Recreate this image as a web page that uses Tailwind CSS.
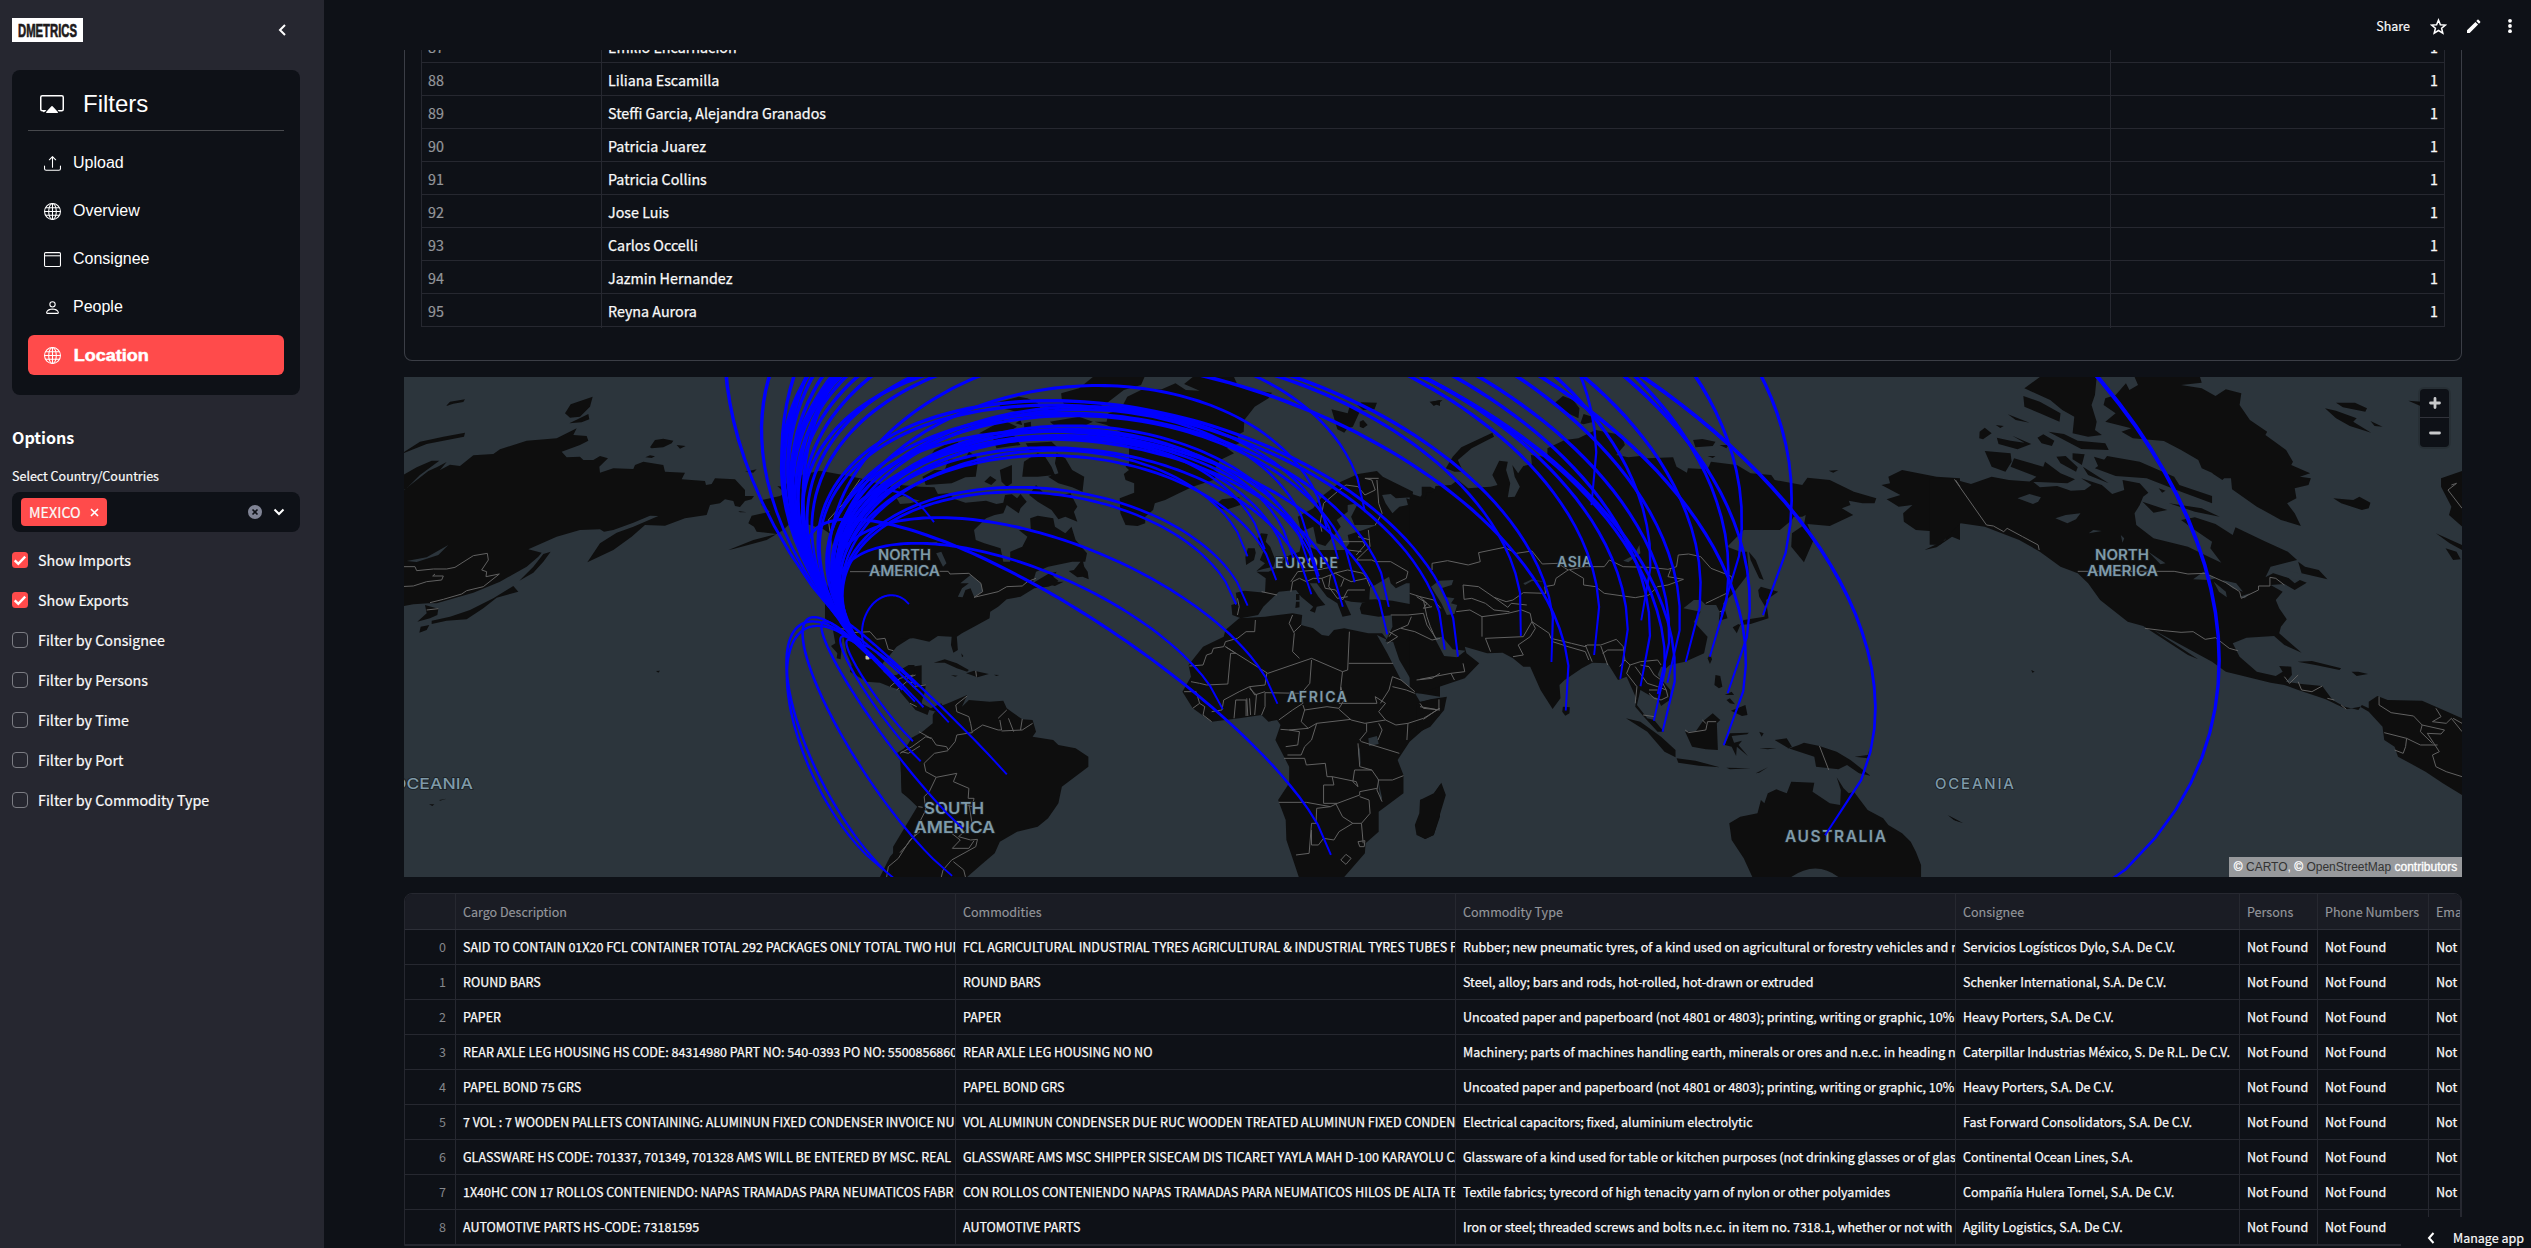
<!DOCTYPE html>
<html lang="en">
<head>
<meta charset="utf-8">
<title>DMetrics</title>
<script src="https://cdn.jsdelivr.net/npm/@tailwindcss/browser@4"></script>
</head>
<body class="flex h-[1248px] w-[2531px] overflow-hidden bg-[#0e1117] font-['Noto_Sans_CJK_SC',sans-serif] text-[14.3px] text-[#fafafa]">

<!-- Sidebar -->
<aside class="flex w-[324px] shrink-0 flex-col bg-[#262730] px-3">
  <div class="flex h-[60px] items-center justify-between pr-[24px]">
    <div class="flex h-6 w-[71px] items-center justify-center bg-white">
      <svg class="h-6 w-[71px]" viewBox="0 0 71 24"><text x="6" y="18.500" textLength="59" lengthAdjust="spacingAndGlyphs" font-family="Liberation Sans, sans-serif" font-weight="bold" font-size="19" fill="#1d1a1b" stroke="#1d1a1b" stroke-width="0.700">DMETRICS</text></svg>
    </div>
    <svg class="h-4 w-3 fill-none stroke-white stroke-2" viewBox="0 0 12 16"><path d="M9 3L4 8l5 5"/></svg>
  </div>

  <nav class="mt-[10px] flex h-[325px] w-72 flex-col rounded-lg bg-[#0e1117] px-4 font-['Liberation_Sans',sans-serif] text-base text-white">
    <div class="flex h-[61px] items-center gap-[19px] border-b border-[#47494d] pl-3 pt-[8px] text-2xl">
      <svg class="h-6 w-6 fill-white" viewBox="0 0 16 16"><path d="M2.500 13.500A.5.5 0 0 1 2 13h-.5A1.500 1.500 0 0 1 0 11.500v-8A1.500 1.500 0 0 1 1.500 2h13A1.500 1.500 0 0 1 16 3.500v8a1.500 1.500 0 0 1-1.500 1.500h-1.900l-.85-1h2.750a.5.5 0 0 0 .5-.5v-8a.5.5 0 0 0-.5-.5h-13a.5.5 0 0 0-.5.5v8a.5.5 0 0 0 .5.5h2.750l-.85 1z"/><path d="M7.620 9.500a.5.5 0 0 1 .76 0l3.550 3.900a.4.4 0 0 1-.3.600H4.400a.4.4 0 0 1-.3-.600z"/></svg>
      <span>Filters</span>
    </div>
    <div class="mt-[12px] flex h-10 items-center gap-3 pl-4">
      <svg class="h-[17px] w-[17px] fill-white" viewBox="0 0 16 16"><path d="M.5 9.900a.5.5 0 0 1 .5.5v2.500a1 1 0 0 0 1 1h12a1 1 0 0 0 1-1v-2.500a.5.5 0 0 1 1 0v2.500a2 2 0 0 1-2 2H2a2 2 0 0 1-2-2v-2.500a.5.5 0 0 1 .5-.5z"/><path d="M7.646 1.146a.5.5 0 0 1 .708 0l3 3a.5.5 0 0 1-.708.708L8.500 2.707V11.500a.5.5 0 0 1-1 0V2.707L5.354 4.854a.5.5 0 1 1-.708-.708l3-3z"/></svg>
      <span>Upload</span>
    </div>
    <div class="mt-2 flex h-10 items-center gap-3 pl-4">
      <svg class="h-[17px] w-[17px] fill-none stroke-white" viewBox="0 0 16 16"><circle cx="8" cy="8" r="7.500"/><ellipse cx="8" cy="8" rx="3.600" ry="7.500"/><path d="M8 .5v15M.5 8h15M1.600 4.500h12.800M1.600 11.500h12.800"/></svg>
      <span>Overview</span>
    </div>
    <div class="mt-2 flex h-10 items-center gap-3 pl-4">
      <svg class="h-[17px] w-[17px] fill-none stroke-white" viewBox="0 0 16 16"><rect x=".5" y="1.500" width="15" height="13" rx="1"/><path d="M.5 4.500h15"/></svg>
      <span>Consignee</span>
    </div>
    <div class="mt-2 flex h-10 items-center gap-3 pl-4">
      <svg class="h-[17px] w-[17px] fill-white" viewBox="0 0 16 16"><path d="M8 8a3 3 0 1 0 0-6 3 3 0 0 0 0 6zm2-3a2 2 0 1 1-4 0 2 2 0 0 1 4 0zm4 8c0 1-1 1-1 1H3s-1 0-1-1 1-4 6-4 6 3 6 4zm-1-.004c-.001-.246-.154-.986-.832-1.664C11.516 10.680 10.289 10 8 10c-2.290 0-3.516.680-4.168 1.332-.678.678-.830 1.418-.832 1.664h10z"/></svg>
      <span>People</span>
    </div>
    <div class="mt-[8px] flex h-10 items-center gap-3 rounded-md bg-[#ff4b4b] pl-4 font-bold">
      <svg class="h-[17px] w-[17px] fill-none stroke-white" viewBox="0 0 16 16"><circle cx="8" cy="8" r="7.500"/><ellipse cx="8" cy="8" rx="3.600" ry="7.500"/><path d="M8 .5v15M.5 8h15M1.600 4.500h12.800M1.600 11.500h12.800"/></svg>
      <svg class="h-5 w-[80px] fill-white" viewBox="0 0 80 20"><text x="0.800" y="15.800" textLength="75" lengthAdjust="spacingAndGlyphs" font-family="Liberation Sans, sans-serif" font-weight="bold" font-size="16" stroke="#fff" stroke-width=".5">Location</text></svg>
    </div>
  </nav>

  <h3 class="mt-[30px] h-6 text-[16.100px] leading-6 font-bold text-white">Options</h3>
  <label class="mt-[17px] block h-5 text-[12.500px] leading-5 [-webkit-text-stroke:0.200px_#fafafa]">Select Country/Countries</label>
  <div class="mt-[6px] flex h-10 w-72 items-center rounded-lg bg-[#0e1117] pr-[14px] pl-[9px]">
    <div class="flex h-7 w-[86px] items-center justify-between rounded bg-[#ff4b4b] pr-[8px] pl-2">
      <span class="leading-5 [-webkit-text-stroke:0.200px_#fafafa]">MEXICO</span>
      <svg class="h-[9px] w-[9px] fill-none stroke-white stroke-[1.600]" viewBox="0 0 9 9"><path d="M1 1l7 7M8 1L1 8"/></svg>
    </div>
    <svg class="ml-auto h-[14px] w-[14px]" viewBox="0 0 14 14"><circle cx="7" cy="7" r="7" fill="#808495"/><path d="M4.500 4.500l5 5M9.500 4.500l-5 5" stroke="#0e1117" stroke-width="1.700"/></svg>
    <svg class="ml-[10px] h-[14px] w-[14px] fill-none stroke-white stroke-2" viewBox="0 0 14 14"><path d="M2.500 4.500L7 9l4.500-4.500"/></svg>
  </div>
  <div id="checks" class="mt-[8px] flex flex-col [-webkit-text-stroke:0.200px_#fafafa]"></div>
</aside>

<main class="relative flex min-w-0 flex-1 flex-col">
  <header class="flex h-[50px] shrink-0 items-center justify-end pt-[2px] pr-[13px]">
    <span class="text-[12.500px] leading-5 [-webkit-text-stroke:0.200px_#fafafa]">Share</span>
    <svg class="ml-[20px] h-[17px] w-[17px] fill-none stroke-white stroke-[1.500]" viewBox="0 0 17 17"><path d="M8.500 2l1.900 4.700 5 .4-3.800 3.200 1.200 4.900-4.300-2.700-4.300 2.700 1.200-4.900L1.600 7.100l5-.4z"/></svg>
    <svg class="ml-[19px] h-[15px] w-[15px] fill-white" viewBox="0 0 15 15"><path d="M1 11.300L9.400 2.900l2.700 2.700L3.700 14H1zM10.300 2l1.200-1.200c.3-.3.700-.3 1 0l1.700 1.700c.3.300.3.700 0 1L13 4.700z"/></svg>
    <svg class="ml-[21px] h-4 w-4 fill-white" viewBox="0 0 16 16"><circle cx="8" cy="2.800" r="1.900"/><circle cx="8" cy="8" r="1.900"/><circle cx="8" cy="13.200" r="1.900"/></svg>
  </header>

  <section class="flex min-h-0 flex-1 flex-col overflow-hidden pr-[69px] pl-20">
    <div class="h-[311px] shrink-0 overflow-hidden rounded-b-lg border-x border-b border-[#41444c]/90 px-4">
      <div id="people" class="-mt-[20px] border-x border-[#262830]"></div>
    </div>

    <!-- Route map -->
    <div class="relative mt-4 h-[500px] shrink-0 overflow-hidden bg-[#2c353c]">
      <svg id="map" class="block h-[500px] w-[2058px]" viewBox="0 0 2058 500">
        <g id="land" fill="#0e0e0e">
          <path transform="translate(-4 -7) scale(.33333)" d="M0,320L50,292 95,272 118,272 60,315 20,355 0,365ZM0,370L35,342 85,303 110,292 140,276 120,300 150,284 180,288 220,256 280,252 300,238 380,212 470,205 530,175 520,195 560,198 565,212 540,225 485,245 500,262 540,260 550,270 580,270 600,258 624,265 598,290 600,308 640,295 700,297 705,285 730,275 790,285 795,305 855,308 845,328 915,333 918,345 935,342 945,325 1005,328 1035,360 1035,378 1062,378 1055,388 1035,393 1020,411 1005,408 1000,393 975,388 960,400 930,405 920,435 855,445 795,467 735,465 695,500 640,540 562,577 600,520 650,488 700,470 775,438 750,437 700,458 640,480 612,485 600,478 540,480 470,500 385,538 425,548 415,560 380,590 300,635 220,668 110,700 85,700 40,703 0,710ZM452,545L430,552 400,590 358,632 400,608 430,575ZM340,648L355,665 290,683 250,715 200,748 140,752 95,762 95,752 150,740 210,720 280,685ZM58,788L62,770 88,765 80,780ZM52,755L80,730 75,705 115,716 112,735 90,745ZM495,130L512,103 578,80 570,110 540,140 510,143ZM508,160L565,132 568,148 545,157ZM750,232L765,210 790,206 820,212 815,220 790,232 755,235ZM830,225L857,228 840,236ZM736,262L750,256 765,259 755,264ZM0,254L60,215 130,200 195,188 192,200 80,222ZM138,108L150,95 195,88 190,96 160,101ZM1035,305L1070,298 1060,308ZM1015,423L1040,427 1020,427ZM768,903L780,902 775,908ZM87,1303L103,1303 97,1308ZM118,1290L140,1286 120,1292Z
          M1132,348L1150,350 1180,320 1260,302 1330,315 1380,325 1450,345 1565,370V802L1530,805 1490,830 1470,855 1448,880 1450,905 1465,917 1490,915 1515,900 1535,890 1565,886V1010L1525,985 1500,960 1470,950 1440,938 1400,935 1350,905 1355,885 1340,850 1328,790 1322,868 1310,865 1312,850 1293,828 1306,820 1298,775 1275,745V680L1290,620 1300,530 1288,490 1270,478 1220,462 1165,465 1150,480 1100,510 1000,537 985,540 1060,510 1130,492 1070,485 1062,470 1045,460 1055,437 1110,425 1085,405V390L1140,378 1155,370Z
          M1568,1085L1535,1103 1520,1130 1490,1150 1502,1175 1505,1268 1556,1307 1540,1350 1505,1420 1470,1460 1440,1521H1568Z"/>
          <path transform="translate(496 -7) scale(.34437 .33333)" d="M0,345L60,350 100,352 110,372 140,370 160,388 190,398 250,392 280,402 300,398 305,375 325,373 340,385 350,372 368,395 350,415 345,430 310,405 300,430 275,435 250,445 215,480 220,510 245,520 292,535 300,575 320,575 320,545 355,530 370,500 345,480 380,480 378,445 400,437 445,445 450,470 480,490 498,470 510,510 543,550 538,575 500,575 430,590 395,605 385,640 430,612 455,605 445,620 460,632 445,645 430,650 390,655 350,680 310,688 285,710 262,725 260,745 215,770 180,790 165,800 168,840 155,848 148,825 150,800 110,798 85,815 40,805 0,805ZM490,603L505,600 530,568 535,590 545,605 548,628 530,620 515,622ZM425,642L440,635 475,635 450,648Z
          M75,345L65,320 100,300 130,300 140,270 190,265 200,245 222,260 225,285 220,320 190,322 150,340ZM360,275L375,265 400,250 420,258 440,290 450,315 400,320 355,320ZM455,250L480,265 500,300 535,320 530,365 500,352 460,340 430,320 460,310 450,280ZM375,375L395,345 420,372 470,375 495,370 515,410 505,425 515,455 480,440 460,448 440,420 400,395ZM468,70L520,55 560,21H710L700,45 650,60 600,100 560,118 540,110 480,110 470,90ZM290,95L345,80 370,85 400,100 410,120 350,130 320,120 290,115ZM435,155L520,140 560,155 530,170 450,168ZM100,240L130,225 170,215 160,240 110,262 80,270ZM230,190L300,150 340,170 290,200ZM245,335L262,318 280,330 265,345ZM290,300L325,285 325,340 310,350 295,335ZM335,160L350,150 355,165ZM360,160L380,155 382,190 362,192ZM365,220L440,215 460,235 380,245ZM270,205L330,195 350,225 280,235ZM425,112L450,105 470,118 440,130Z
          M565,155L600,155 605,130 640,120 660,80 700,60 760,58 800,40 830,60 870,62 825,42 850,21H970L980,45 1020,60 1080,68 1070,85 1030,110 1000,150 998,185 980,195 985,220 950,235 970,250 930,270 912,300 925,310 910,330 850,350 810,370 770,390 740,400 735,420 712,440 712,460 690,468 655,465 640,430 638,385 680,368 680,340 655,330 650,312 665,300 655,290 665,280 665,230 640,215 640,185 600,165ZM903,392L920,400 935,388 985,382 988,405 945,420 925,412 908,400Z
          M1253,118L1300,130 1305,112 1335,125 1315,170 1300,175 1290,188 1270,178ZM1328,105L1340,97 1385,98 1378,118 1345,120ZM1335,155L1345,150 1358,165 1345,175 1335,170ZM1540,97L1568,90V108Z
          M1040,505L1048,490 1068,492 1062,515 1075,530 1090,570 1085,590 1055,597 1035,603 1060,580 1045,570 1055,545 1042,525ZM1003,562L1010,535 1030,535 1033,548 1028,570 1005,585Z
          M1155,440L1200,415 1230,375 1280,335 1330,312 1385,303 1402,320 1440,340 1490,365 1487,382 1440,385 1425,372 1400,375 1410,400 1430,430 1450,410 1475,405 1470,385 1500,395 1515,375 1515,350 1540,350 1568,365V675L1530,672 1500,640 1470,640 1440,655 1425,640 1420,620 1380,645 1365,652 1362,700 1310,695 1290,690 1310,735 1285,740 1270,700 1240,680 1210,640 1190,640 1215,680 1235,705 1210,710 1205,728 1190,722 1200,710 1165,680 1150,660 1100,665 1055,710 1040,735 990,745 965,735 962,705 980,700 975,668 1000,662 1060,668 1062,625 1035,605 1070,605 1100,590 1120,560 1160,545 1165,520 1175,495 1190,530 1210,540 1290,540 1305,520 1300,495 1345,480 1385,465 1320,465 1310,440 1330,400 1300,405 1300,425 1268,450 1280,470 1265,490 1235,528 1210,520 1200,470 1165,485ZM1335,715L1345,690 1380,688 1430,692 1480,702 1568,690V740H1520L1430,735 1390,740 1340,732ZM1428,735L1568,700V980L1505,970 1490,940 1450,870 1432,815 1410,815 1430,770Z
          M1415,810L1385,795 1415,850 1435,890 1455,930 1490,960 1510,995 1568,985V1035L1480,1115 1445,1170 1462,1215V1270L1390,1325V1385L1352,1420 1350,1450 1290,1521H1158L1135,1450 1122,1410 1120,1350 1098,1290 1130,1240V1190L1090,1110 1105,1065 1095,1050 1070,1055 1050,1035 985,1045 905,1055 850,1015 820,965 845,920 838,885 880,830 940,800 945,780 985,745 1060,740 1140,730 1168,735 1165,765 1200,775 1225,795 1245,798 1260,780 1290,775 1360,790 1400,790ZM1568,1245L1545,1280 1510,1290 1508,1330 1495,1365 1500,1395 1525,1407 1550,1395 1568,1340ZM1150,672L1160,672 1160,690 1150,690ZM1150,695L1160,695 1160,712 1148,714Z
          M0,900L25,885 42,885 42,920 25,940 75,945 72,965 62,1000 90,1015 120,1000 125,1012 105,1025 85,1020 80,1035 45,1020 0,965ZM98,878L130,868 165,880 200,900 195,905 165,895 130,878ZM192,910L215,902 258,912 225,922ZM148,915L168,917 160,920ZM273,914L288,915 280,918ZM178,850L184,858 180,862Z
          M110,1012L150,995 195,975 180,1010 200,990 260,995 300,992 310,1015 330,1030 355,1048 385,1050 395,1085 385,1100 445,1110 460,1125 510,1135 547,1160V1190L470,1250 460,1300 430,1345 400,1370 340,1385 290,1415 275,1450 235,1485 195,1521H-20L-20,1430 50,1310 5,1265 0,1150 35,1110 65,1085 95,1060 95,1035Z"/>
          <path transform="translate(1016 -7) scale(.34437 .33333)" d="M-30,370L15,385 20,368 40,365 45,348 90,345 110,330 140,355 205,350 225,345 210,315 230,272 255,275 250,300 262,340 255,382 275,380 290,350 275,320 268,285 285,310 300,288 325,283 322,255 370,262 370,235 420,210 460,205 510,180 585,195 595,225 570,255 605,262 640,258 660,265 735,262 745,290 775,308 778,295 835,298 845,275 920,285 960,310 1020,315 1030,330 1110,345 1125,323 1190,330 1260,365 1325,385 1320,400 1285,400 1245,392 1250,405 1225,415 1258,435 1190,468 1125,462 1143,510 1115,577 1078,530 1080,490 1115,465 1120,435 1110,440 1085,440 1080,450 1045,480 940,480 892,530 930,545 950,545 955,610 910,670 880,700 893,745 868,752 870,725 860,705 830,705 815,690 795,690 765,715 815,725 795,755 835,800 825,850 770,875 725,885 715,895 700,890 690,915 727,960 725,990 700,1008 690,985 665,975 640,960 630,1005 660,1045 680,1050 708,1085 690,1085 650,1040 625,1010 628,985 600,920 575,930 545,880 500,878 470,895 420,930 405,945 408,985 385,1017 350,960 320,890 300,890 270,865 240,848 195,850 130,830 135,850 172,880 130,925 0,970H-30ZM-10,1000L30,988 78,980 70,1020 30,1070 -10,1090ZM75,295L95,260 120,232 210,188 215,200 150,235 110,270 125,305 100,305ZM390,100L415,78 445,90 463,115 460,145 430,130ZM466,160L475,132 500,140 505,155 475,163ZM793,210L820,207 858,215 850,228 800,232ZM870,225L895,225 890,235ZM835,258L858,258 850,264ZM1187,302L1215,300 1200,308ZM28,95L65,90 55,100 40,108ZM0,1290L40,1270 62,1238 75,1275 40,1395 15,1407 0,1398Z
          M415,1010L435,1012 434,1030 422,1037 413,1025ZM598,1045L640,1055 700,1100 742,1140 742,1162 710,1145 660,1085ZM745,1165L800,1172 870,1192 810,1187 750,1178ZM770,1085L800,1085 820,1055 850,1030 872,1050 862,1060 865,1140 830,1138 790,1130ZM885,1125L900,1090 955,1088 950,1093 905,1098 912,1118 935,1112 925,1125 952,1158 920,1130 918,1158 905,1130ZM855,945L858,915 872,918 878,950 868,955ZM903,1022L945,1005 951,1035 935,1038ZM885,975L905,965 912,975ZM890,990L900,985 915,1003 900,1000ZM848,1005L862,990ZM835,865L843,853 848,868 842,882ZM985,1085L998,1090 992,1100ZM985,1135L1035,1134 1010,1138ZM890,1193L960,1195 900,1198ZM975,1210L1010,1192 985,1208ZM1030,1110L1065,1105 1080,1130 1065,1138 1100,1125 1115,1118 1160,1128 1210,1145 1250,1170 1308,1217 1275,1210 1240,1185 1215,1198 1150,1190 1145,1160 1070,1135ZM1262,1160L1300,1155 1305,1140 1300,1165ZM1335,1160L1356,1172ZM930,765L940,750 1000,740 1005,715 985,680 982,660 990,650 1040,665 1005,690 1012,745 960,762ZM908,772L925,762 930,765 920,790ZM955,545L975,570 998,630 985,625 960,570Z
          M965,1521L940,1465 905,1410 898,1360 930,1340 980,1330 990,1290 1000,1300 1010,1270 1035,1258 1065,1270 1078,1235 1145,1238 1140,1265 1190,1300 1220,1305 1222,1260 1210,1222 1230,1255 1245,1270 1260,1265 1300,1320 1345,1345 1360,1365 1400,1390 1425,1415 1440,1445 1455,1485V1521H1215Q1150,1470 1078,1521Z
          M1568,325L1500,320 1400,300 1360,320 1365,340 1340,345 1395,375 1355,388 1390,410 1430,405 1403,430 1405,455 1440,480 1530,487 1525,510 1465,540 1500,532 1545,500 1568,510ZM1535,1337L1568,1355 1550,1350ZM1340,423L1362,428Z"/>
          <path transform="translate(1536 -7) scale(.34437 .33333)" d="M-30,325L30,325 90,342 150,320 200,330 270,335 290,352 340,348 380,362 420,360 440,345 410,325 470,345 500,372 535,360 530,330 580,340 605,368 590,380 580,405 565,430 570,465 620,505 720,530 780,560 817,578 785,535 790,515 740,480 700,450 740,442 800,462 850,495 858,472 940,512 1010,545 1037,570 960,590 945,622 985,600 1030,640 1045,630 1065,638 1030,660 1000,642 960,645 995,665 975,690 985,715 1007,748 990,770 985,790 1050,848 1000,825 970,798 890,803 850,820 870,860 920,905 975,918 995,905 985,888 1020,890 1022,915 1005,935 1050,942 1110,948 1140,990 1175,1010 1215,1020 1225,1005 1245,1015 1245,995 1270,978 1300,990 1400,992 1450,1015 1516,1045V1275L1460,1240 1410,1205 1330,1160 1320,1130 1290,1110 1285,1070 1245,1025 1220,1010 1180,1018 1120,988 1040,960 1000,945 960,938 830,905 790,875 620,780 750,868 720,855 590,768 545,755 465,690 430,640 400,610 350,590 290,545 230,510 130,470 60,460 40,480 0,524H-30ZM1040,575L1060,590 1100,600 1125,628 1050,610Z
          M540,40L550,60 575,45 565,21H755L760,38 700,45 760,55 800,78 830,58 875,70 870,105 900,150 950,185 945,195 1005,240 1025,275 1020,285 1075,310 1045,320 1077,325 1070,345 1030,355 1035,385 1008,400 1030,430 1048,468 990,450 920,410 848,358 845,325 825,325 760,295 750,270 700,240 650,213 560,205 527,185 555,175 480,155 510,130 475,105 480,85 510,75ZM790,310L835,315 820,330Z
          M245,55L290,21H455L450,75 440,105 455,155 450,180 470,195 430,200 385,190 390,140 355,120 320,90ZM242,78L290,95 350,130 347,155 290,130 245,110ZM315,185L360,192 400,212 480,220 490,240 410,237 370,215ZM165,203L205,212 245,218 210,197 265,222 225,238 170,222ZM283,203L300,193 332,212 325,228 295,220ZM130,243L205,250 208,275 190,305 150,290ZM115,185L130,173 150,190 125,208 114,205ZM205,290L215,265 250,275 300,290 305,275 350,310 392,328 370,340 260,335 280,320ZM197,133L260,158 220,150ZM265,145L295,163ZM155,145L170,150ZM162,165L185,168 175,174ZM338,260L365,258 400,292 395,305 350,280ZM385,250L420,253 412,285 385,268ZM447,260L480,270 460,290ZM485,258L580,275 680,320 695,345 790,378 790,400 700,365 600,325 510,318 450,295 470,280ZM415,290L490,340 430,315ZM665,400L760,415 812,440 740,425ZM588,395L660,420 620,428ZM635,355L655,362 645,368Z
          M1142,385L1200,390 1218,380 1250,398 1245,415 1225,420 1165,400ZM1150,98L1205,98 1240,115 1235,125 1170,112ZM1118,115L1150,122 1210,145 1200,155 1252,188 1190,168 1150,145ZM1250,153L1285,170 1262,168ZM1360,92L1400,95V110ZM1455,325L1516,303V470L1478,435 1485,410 1455,350ZM1440,490L1516,525V540L1480,520ZM1468,535L1500,545 1512,568 1490,570ZM1038,875L1080,873 1165,895 1160,900 1090,885ZM1195,905L1215,905 1243,912 1210,918ZM1262,915L1278,917ZM1140,917L1160,918ZM1080,852L1095,860ZM265,900L275,905 268,908ZM173,1303L192,1305ZM187,1290L200,1286ZM22,1335L68,1360 45,1352Z"/>
        </g>
        <!-- inland water -->
        <g fill="#2c353c">
          <path transform="translate(-4 -7) scale(.33333)" d="M20,573L80,562 145,525 115,555 50,576ZM1490,385L1510,378 1560,392 1530,400 1500,402Z"/>
          <path transform="translate(496 -7) scale(.34437 .33333)" d="M168,680L180,655 200,640 175,640 205,615 235,640 240,665 215,680 205,655 190,660 182,682ZM105,550L120,545 135,580 125,590ZM1360,1105L1385,1098 1390,1122 1362,1128ZM60,520L110,515 130,500 105,520ZM1335,1130L1338,1190 1330,1150ZM1385,1215L1400,1285 1395,1290 1390,1250Z"/>
          <path transform="translate(1016 -7) scale(.34437 .33333)" d="M42,803L70,858 108,862 132,842 95,838 65,800ZM32,650L55,632 97,630 92,645 62,655 70,680 100,685 90,700 108,705 100,732 78,735 62,700ZM300,640L325,628 362,635 325,633 305,645ZM637,525L640,550 605,577 590,572 622,555Z"/>
          <path transform="translate(1536 -7) scale(.34437 .33333)" d="M225,385L260,372 293,382 285,395 270,402ZM335,445L365,435 408,430 395,448 370,460ZM432,490L445,480 470,483 440,488ZM525,495L535,505 530,518ZM605,545L655,580 640,583ZM735,628L765,605 800,625 780,630ZM795,635L830,665 833,682 810,665ZM820,630L860,640 880,665 850,655ZM870,680L900,670 885,685ZM955,605L985,592 1010,602 1050,612 1040,632 1000,620Z"/>
        </g>
        <!-- borders -->
        <g fill="none" stroke="#616161" stroke-width="1">
          <path vector-effect="non-scaling-stroke" transform="translate(-4 -7) scale(.33333)" d="M0,590L45,590 50,602 100,597 140,597 165,592 220,557 262,550 265,570 245,600 260,605 258,620 298,612 250,650 200,662 185,672 130,688 90,698M105,612L98,618 130,618 125,630 80,635 40,648 0,650M80,720L115,716M1380,328L1330,400 1285,450 1290,485M1350,605H1560M1305,775L1345,778 1355,788 1410,785 1430,808 1455,805 1465,838 1480,842M1505,1145L1525,1150 1560,1128M1555,1310L1568,1312M1460,1521L1465,1490 1495,1465 1530,1410 1560,1385M1470,950L1500,925 1540,915M1490,960L1520,935 1550,940M1530,1000L1550,1010"/>
          <path vector-effect="non-scaling-stroke" transform="translate(496 -7) scale(.34437 .33333)" d="M115,604H140L145,612 200,610 235,640 240,665 215,682 285,665 310,650 355,648 370,635 395,625M0,1150L35,1130 75,1100 90,1105 55,1085M90,1102L105,1125 135,1130 140,1140 160,1115 165,1095 195,1090 210,1088 205,1060 200,1040 165,1025 162,1005 195,978M140,1142L100,1150 70,1180 75,1205 105,1222 165,1210 155,1235 200,1255 198,1285 215,1285 210,1310 170,1300M105,1222L85,1265 70,1280 75,1320 60,1350 50,1385 20,1425 0,1448M200,1300L210,1365 170,1400 205,1410 225,1408 220,1430 150,1470 125,1500 120,1521M150,1390L175,1410 152,1435 200,1435 215,1412M155,1475L185,1500 190,1521M285,1045L310,1020M210,1085L240,1065 285,1080 295,1080 290,1050M295,1083L355,1080 385,1060M315,1045L330,1085M355,1047L350,1080M20,925L45,915M35,950L75,945M220,903L222,920
          M980,685L985,710 980,735M1050,665L1095,675M1135,665L1140,635 1160,625 1180,635 1200,625 1225,625 1250,615 1265,610 1290,625M1135,635L1155,605 1210,600 1260,590M1225,625L1235,655 1265,660 1285,690M1250,615L1245,650 1270,685 1300,680M1290,625L1310,635 1355,625 1365,650M1285,690L1300,660 1350,660M1290,625L1280,650M1260,610L1300,600 1345,610 1355,625M1225,485L1220,460 1230,400 1270,365 1295,345 1330,350 1350,375 1380,360 1370,330 1350,325 1390,325M1385,330L1390,400 1400,430 1380,465M1360,480L1365,530 1325,570 1370,570 1380,575 1425,575 1475,605 1470,625 1440,640M1285,515H1345L1350,525 1325,555M1300,540L1340,545M1330,500L1365,510M1480,670L1510,680 1540,710M1500,680L1530,700 1520,715 1545,710M1425,735L1475,735 1520,730 1530,765 1560,810M1485,740L1475,765 1430,785 1420,800M1455,775L1495,785 1545,810 1568,805M1420,785L1445,800 1415,820M1500,930L1545,925 1568,910
          M1032,750L1030,785 1005,785 980,805 945,815 940,830 910,835 905,850 890,855 880,885 840,888M945,830L1060,905 1068,910 1195,865 1285,905 1300,900 1305,785M1303,880H1432M945,830L975,850 960,850 952,942 890,945 870,940 845,935M1140,735L1130,760 1145,790 1140,845 1160,865M1165,765L1145,785M1195,870L1190,940 1165,970 1060,968 1060,1010 1050,1035M1065,910L1060,945 1015,950 985,965 940,990 935,1020 905,1025M1015,950L1030,975 1060,965M1015,955L1035,975 1030,1035M1015,985L1018,1035M1007,985L1010,1038M975,990H1005L1005,1038M975,990L970,1045M850,1015L870,1000 885,1010 880,1035 905,1055M825,965H860L870,1000M1165,970L1170,1000 1140,1020 1100,1050M1170,1005L1175,1020 1165,1055 1185,1075 1130,1080 1105,1078M1285,905L1280,950 1290,990 1275,1015 1240,1010 1175,1020M1280,950L1275,1000 1385,1000 1380,980 1410,1000 1390,1025 1410,1050 1350,1060 1310,1050 1275,1018M1430,920L1420,960 1395,1000M1430,920L1455,930 1495,965M1510,1000L1520,1015 1568,1020M1430,950L1470,960 1495,970M1410,1050L1440,1065 1475,1060 1520,1045 1568,1015M1475,1060L1472,1110M1355,1060L1355,1085 1335,1110 1340,1115 1450,1150M1390,1060L1400,1080 1388,1110M1185,1075L1210,1060 1310,1048M1210,1060L1195,1110 1175,1130 1165,1155 1125,1155M1130,1080L1160,1085 1155,1125 1120,1130M1115,1165H1175L1180,1185 1235,1180 1240,1220 1255,1220 1260,1245 1230,1245V1300L1270,1300M1330,1120L1335,1190 1370,1200 1320,1200 1315,1235 1330,1250 1325,1235 1255,1220M1370,1200L1390,1230 1385,1260 1400,1295M1390,1230H1430L1462,1217M1100,1297H1180L1250,1310 1270,1300 1335,1275 1335,1265 1385,1255M1250,1310L1210,1315 1208,1360H1195L1188,1450 1150,1455M1265,1300L1285,1340 1315,1360 1340,1360 1365,1330 1362,1290 1335,1280M1315,1360L1275,1385 1260,1410 1230,1405 1215,1425 1195,1425 1195,1380M1340,1360L1345,1420M1330,1415L1350,1412 1348,1430 1335,1430ZM1280,1470L1295,1453 1310,1465 1295,1483Z"/>
          <path vector-effect="non-scaling-stroke" transform="translate(1016 -7) scale(.34437 .33333)" d="M35,600L35,580 80,572 140,585 175,575 170,548 245,532 280,550 325,543 355,582 400,580 430,600 480,590 535,590 550,570 590,590 665,592 720,598 745,590 750,555 780,552 815,560 845,595 895,615 905,620 905,645 890,665M430,600L395,625 390,645 362,650 365,670 300,668 270,690 250,695 215,682 170,650 125,645 128,688M435,600L475,625 475,645 510,650 535,670 625,683 665,675 690,650 720,645 765,628 720,620 728,598M128,688L150,685 190,700 215,720 260,725M215,682L255,712 265,700 310,705M0,680L40,690 60,715M10,690L20,740 30,770 45,805M105,725L145,720 180,740 255,730 295,720 320,730 325,755 300,800 190,805 205,845M180,740V800M325,755L375,790 380,805 440,820 480,830 485,825 525,825 570,808 590,830 595,870 580,890M325,755L335,775 320,800 285,825 300,855 270,860M385,815L430,830 480,845 490,870M480,825L500,875M525,828L545,885M530,850L545,840 590,840M595,870L610,885 640,875 690,870 700,885M610,885L600,910 630,950 625,1000M625,890L660,940 690,950 715,960 720,980 700,990M640,885L665,890 680,915 700,930 715,960M665,960H690M665,970L680,985 700,990M648,1035L680,1040M830,700L870,680 890,670M870,725L885,722M770,1080L780,1088 830,1080 835,1055 860,1055M820,1050L830,1060M1160,1128L1187,1200M125,880L130,905 90,910 100,930M90,910L40,920 0,928M55,988V1015L10,1048M0,1010L45,1018M1555,330L1568,350"/>
          <path vector-effect="non-scaling-stroke" transform="translate(1536 -7) scale(.34437 .33333)" d="M42,328L135,465 155,468 185,485 195,475 240,500 285,525 288,540M400,604H680L720,612 770,610 830,638 870,665 875,685 925,660 925,648 958,648 958,622 975,625 1000,645M595,775L650,782 700,787 735,785 770,808 800,803 840,835 865,842M1000,920L1015,940 1040,915M1040,935L1050,960 1080,965 1110,948M1125,985L1145,990M1165,1005L1180,1018M1275,980L1275,1005 1310,1028 1375,1038 1400,1065 1465,1080 1455,1092 1415,1090 1450,1145 1430,1155 1440,1190 1470,1205 1516,1220M1290,1088L1355,1105 1395,1125 1445,1125M1355,1105L1352,1130 1345,1150 1320,1140M1400,1065L1395,1085 1430,1120M1440,1015L1455,1040 1430,1055 1470,1060 1485,1045 1516,1085M1490,1045L1516,1060M1516,415L1475,360 1500,340 1485,345"/>
        </g>
        <g id="labels" fill="#7f9aa9" font-family="Inter, sans-serif" font-weight="600" stroke="#1a2024" stroke-width="1.500" paint-order="stroke">
          <text x="474" y="183" font-size="14" textLength="53" lengthAdjust="spacingAndGlyphs">NORTH</text>
          <text x="465" y="199" font-size="14" textLength="71" lengthAdjust="spacingAndGlyphs">AMERICA</text>
          <text x="520" y="437" font-size="15.500" textLength="60" lengthAdjust="spacingAndGlyphs">SOUTH</text>
          <text x="510" y="455.500" font-size="15.500" textLength="81" lengthAdjust="spacingAndGlyphs">AMERICA</text>
          <text x="871" y="191" font-size="14" textLength="63">EUROPE</text>
          <text x="883" y="325" font-size="14" textLength="60">AFRICA</text>
          <text x="1153" y="190" font-size="14" textLength="35">ASIA</text>
          <text x="1381" y="465" font-size="15.500" textLength="101">AUSTRALIA</text>
          <text x="1531" y="412" font-size="15" font-weight="500" textLength="79">OCEANIA</text>
          <text x="-11" y="412" font-size="15" font-weight="500" textLength="80" lengthAdjust="spacingAndGlyphs">OCEANIA</text>
          <text x="1691" y="183" font-size="14" textLength="54" lengthAdjust="spacingAndGlyphs">NORTH</text>
          <text x="1683" y="199" font-size="14" textLength="71" lengthAdjust="spacingAndGlyphs">AMERICA</text>
        </g>
        <rect x="461.500" y="278.500" width="4" height="4" rx="1" fill="#c9c6a3"/>
        <g id="arcs" fill="#0000ff"></g>
      </svg>
      <div class="absolute top-3 right-[13px] flex w-[29px] flex-col divide-y divide-[#31333b] rounded bg-[#0e1117] shadow-[0_0_0_2px_rgba(0,0,0,0.1)]">
        <button class="flex h-[29px] items-center justify-center"><svg class="h-3 w-3 stroke-[#c8c9cb] stroke-[2.800]" viewBox="0 0 12 12"><path d="M1.500 6h9M6 1.500v9" stroke-linecap="round"/></svg></button>
        <button class="flex h-[29px] items-center justify-center"><svg class="h-3 w-3 stroke-[#c8c9cb] stroke-[2.800]" viewBox="0 0 12 12"><path d="M1.500 6h9" stroke-linecap="round"/></svg></button>
      </div>
      <div class="absolute right-0 bottom-0 flex h-5 w-[233px] items-center justify-center bg-[#97999c] font-['Liberation_Sans',sans-serif] text-xs whitespace-pre text-white"><span class="[-webkit-text-stroke:0.300px_white]">© </span><span class="text-[#333]">CARTO</span>, <span class="[-webkit-text-stroke:0.300px_white]">© </span><span class="text-[#333]">OpenStreetMap</span><span class="[-webkit-text-stroke:0.300px_white]"> contributors</span></div>
    </div>

    <!-- Shipments -->
    <div id="grid" class="mt-4 w-[2058px] shrink-0 overflow-hidden rounded-t-lg border border-[#262830] text-[12.530px]"></div>
  </section>

  <div class="absolute right-0 bottom-0 flex h-[31px] w-[130px] items-center bg-[#0e1117] pt-[11px] pl-[25px]">
    <svg class="h-[14px] w-[10px] fill-none stroke-white stroke-2" viewBox="0 0 10 14"><path d="M7.500 2L3 7l4.500 5"/></svg>
    <span class="ml-[17px] text-[12.500px] leading-5 whitespace-nowrap [-webkit-text-stroke:0.200px_#fafafa]">Manage app</span>
  </div>
</main>

<script>
// sidebar options
document.getElementById('checks').innerHTML = [
  ['Show Imports', 1], ['Show Exports', 1], ['Filter by Consignee'], ['Filter by Persons'],
  ['Filter by Time'], ['Filter by Port'], ['Filter by Commodity Type']
].map(([t, on]) => `<div class="flex h-10 items-center gap-[10px]">${on
  ? '<svg class="h-4 w-4" viewBox="0 0 16 16"><rect width="16" height="16" rx="3.500" fill="#ff4b4b"/><path d="M2.700 8.300l3.600 3.500 6.900-7.200" fill="none" stroke="#fff" stroke-width="2.400"/></svg>'
  : '<span class="h-4 w-4 rounded border border-[#7b7c83]"></span>'}<span class="leading-5">${t}</span></div>`).join('');

// people table
document.getElementById('people').innerHTML = ['Emilio Encarnacion', 'Liliana Escamilla', 'Steffi Garcia, Alejandra Granados',
  'Patricia Juarez', 'Patricia Collins', 'Jose Luis', 'Carlos Occelli', 'Jazmin Hernandez', 'Reyna Aurora']
  .map((n, i) => `<div class="grid h-[33px] grid-cols-[180px_1509px_1fr] border-b border-[#262830] leading-[34px]"><div class="border-r border-[#262830] pl-[6px] text-[#94969b] [-webkit-text-stroke:0.200px_#94969b]">${87 + i}</div><div class="border-r border-[#262830] pl-[6px] [-webkit-text-stroke:0.250px_#fafafa]">${n}</div><div class="pr-[6px] text-right [-webkit-text-stroke:0.250px_#fafafa]">1</div></div>`).join('');

// shipments table
const nf = 'Not Found';
const rows = [
  ['SAID TO CONTAIN 01X20 FCL CONTAINER TOTAL 292 PACKAGES ONLY TOTAL TWO HUNDRED', 'FCL AGRICULTURAL INDUSTRIAL TYRES AGRICULTURAL & INDUSTRIAL TYRES TUBES FLAPS', 'Rubber; new pneumatic tyres, of a kind used on agricultural or forestry vehicles and machines', 'Servicios Logísticos Dylo, S.A. De C.V.'],
  ['ROUND BARS', 'ROUND BARS', 'Steel, alloy; bars and rods, hot-rolled, hot-drawn or extruded', 'Schenker International, S.A. De C.V.'],
  ['PAPER', 'PAPER', 'Uncoated paper and paperboard (not 4801 or 4803); printing, writing or graphic, 10%', 'Heavy Porters, S.A. De C.V.'],
  ['REAR AXLE LEG HOUSING HS CODE: 84314980 PART NO: 540-0393 PO NO: 5500856860', 'REAR AXLE LEG HOUSING NO NO', 'Machinery; parts of machines handling earth, minerals or ores and n.e.c. in heading no', 'Caterpillar Industrias México, S. De R.L. De C.V.'],
  ['PAPEL BOND 75 GRS', 'PAPEL BOND GRS', 'Uncoated paper and paperboard (not 4801 or 4803); printing, writing or graphic, 10%', 'Heavy Porters, S.A. De C.V.'],
  ['7 VOL : 7 WOODEN PALLETS CONTAINING: ALUMINUN FIXED CONDENSER INVOICE NU', 'VOL ALUMINUN CONDENSER DUE RUC WOODEN TREATED ALUMINUN FIXED CONDEN', 'Electrical capacitors; fixed, aluminium electrolytic', 'Fast Forward Consolidators, S.A. De C.V.'],
  ['GLASSWARE HS CODE: 701337, 701349, 701328 AMS WILL BE ENTERED BY MSC. REAL', 'GLASSWARE AMS MSC SHIPPER SISECAM DIS TICARET YAYLA MAH D-100 KARAYOLU CAD', 'Glassware of a kind used for table or kitchen purposes (not drinking glasses or of glass', 'Continental Ocean Lines, S.A.'],
  ['1X40HC CON 17 ROLLOS CONTENIENDO: NAPAS TRAMADAS PARA NEUMATICOS FABR', 'CON ROLLOS CONTENIENDO NAPAS TRAMADAS PARA NEUMATICOS HILOS DE ALTA TEN', 'Textile fabrics; tyrecord of high tenacity yarn of nylon or other polyamides', 'Compañía Hulera Tornel, S.A. De C.V.'],
  ['AUTOMOTIVE PARTS HS-CODE: 73181595', 'AUTOMOTIVE PARTS', 'Iron or steel; threaded screws and bolts n.e.c. in item no. 7318.1, whether or not with', 'Agility Logistics, S.A. De C.V.']
];
const cell = t => `<div class="overflow-hidden border-r border-[#262830] pl-[7px] whitespace-nowrap">${t.replace('&', '&amp;')}</div>`;
document.getElementById('grid').innerHTML =
  `<div class="grid h-9 grid-cols-[51px_500px_500px_500px_284px_78px_111px_1fr] border-b border-[#2d2f38] bg-[#1a1c24] leading-[36px] text-[#94969b] [-webkit-text-stroke:0.150px_#94969b]"><div class="border-r border-[#262830]"></div>${['Cargo Description', 'Commodities', 'Commodity Type', 'Consignee', 'Persons', 'Phone Numbers', 'Emails'].map(cell).join('')}</div>` +
  rows.map((r, i) => `<div class="grid h-[35px] grid-cols-[51px_500px_500px_500px_284px_78px_111px_1fr] border-b border-[#262830] leading-[33px]"><div class="border-r border-[#262830] pr-[9px] text-right text-[#85878c]">${i}</div><div class="col-span-7 grid grid-cols-subgrid [-webkit-text-stroke:0.250px_#fafafa]">${[...r, nf, nf, 'Not'].map(cell).join('')}</div></div>`).join('');

// arcs from Mexico, projected with a pitched camera
const W = 1310, K = W / 360, TH = 40 * Math.PI / 180, F = 750, C = Math.cos(TH), S = Math.sin(TH);
const merc = a => Math.log(Math.tan(Math.PI / 4 + a * Math.PI / 360)) * 180 / Math.PI;
const ground = (lat, lon) => [(lon - 47.350) * K, (merc(lat) - 35) * K];
const hub = ground(23.6585, -102.0077);
const places = [[39.78,-100.45],[61.07,-107.99],[-10.33,-53.2],[4.1,-72.9],[-1.34,-79.37],[-6.87,-75.05],[-23.3,-58.17],[-32.88,-56.02],[-31.76,-71.32],[-34.997,-64.967],
  [8.56,-81.13],[10.27,-84.07],[15.58,-90.35],[15.26,-86.08],[13.8,-88.9],
  [-28.82,24.99],[7.99,-5.57],[9.6,7.99],[39.66,-8.13],[39.33,-4.84],[52.87,-7.98],[54.7,-3.28],[46.6,1.89],[50.64,4.67],[52.5,5.75],[51.16,10.45],[42.64,12.67],[47.59,14.12],[45.81,14.48],[55.67,10.33],[59.67,14.52],[63.25,25.92],[52.2,19.13],[45.99,24.69],[38.99,21.99],[38.96,34.92],[30.81,34.86],
  [64.69,97.75],[26.16,50.5],[24,53.99],[30.33,71.25],[22.35,78.67],[7.56,80.71],[24.48,90.29],[17.17,96],[14.9,100.83],[15.93,107.97],[12.54,104.81],[4.57,102.27],[1.36,103.82],[35,105],[22.35,114.18],[23.97,120.98],[36.64,127.7],[36.57,139.24],[12.75,122.73],[-2.48,117.89],[-24.78,134.75],[-41.5,172.83]];
let out = '';
for (const [la, lo] of places) {
  const b = ground(la, lo), D = Math.hypot(b[0] - hub[0], b[1] - hub[1]), P = [];
  const N = 98;
  for (let i = 0; i <= N; i++) {
    const r = i / N, z = Math.sqrt(r * (1 - r)) * D, X = hub[0] + (b[0] - hub[0]) * r, Y = hub[1] + (b[1] - hub[1]) * r;
    const d = F + Y * S - z * C;
    P.push([1029 + F * X / d, 250 - F * (Y * C + z * S) / d, (1.9 + z / 522 * 2.7) / 2]);
  }
  const L = [], R = [];
  P.forEach((p, i) => {
    const a = P[Math.max(0, i - 1)], c = P[Math.min(N, i + 1)], h = Math.hypot(c[0] - a[0], c[1] - a[1]) || 1;
    const nx = -(c[1] - a[1]) / h * p[2], ny = (c[0] - a[0]) / h * p[2];
    L.push((p[0] + nx).toFixed(1) + ',' + (p[1] + ny).toFixed(1));
    R.unshift((p[0] - nx).toFixed(1) + ',' + (p[1] - ny).toFixed(1));
  });
  out += `<polygon points="${L.join(' ')} ${R.join(' ')}"/>`;
}
document.getElementById('arcs').innerHTML = out;
</script>
</body>
</html>
